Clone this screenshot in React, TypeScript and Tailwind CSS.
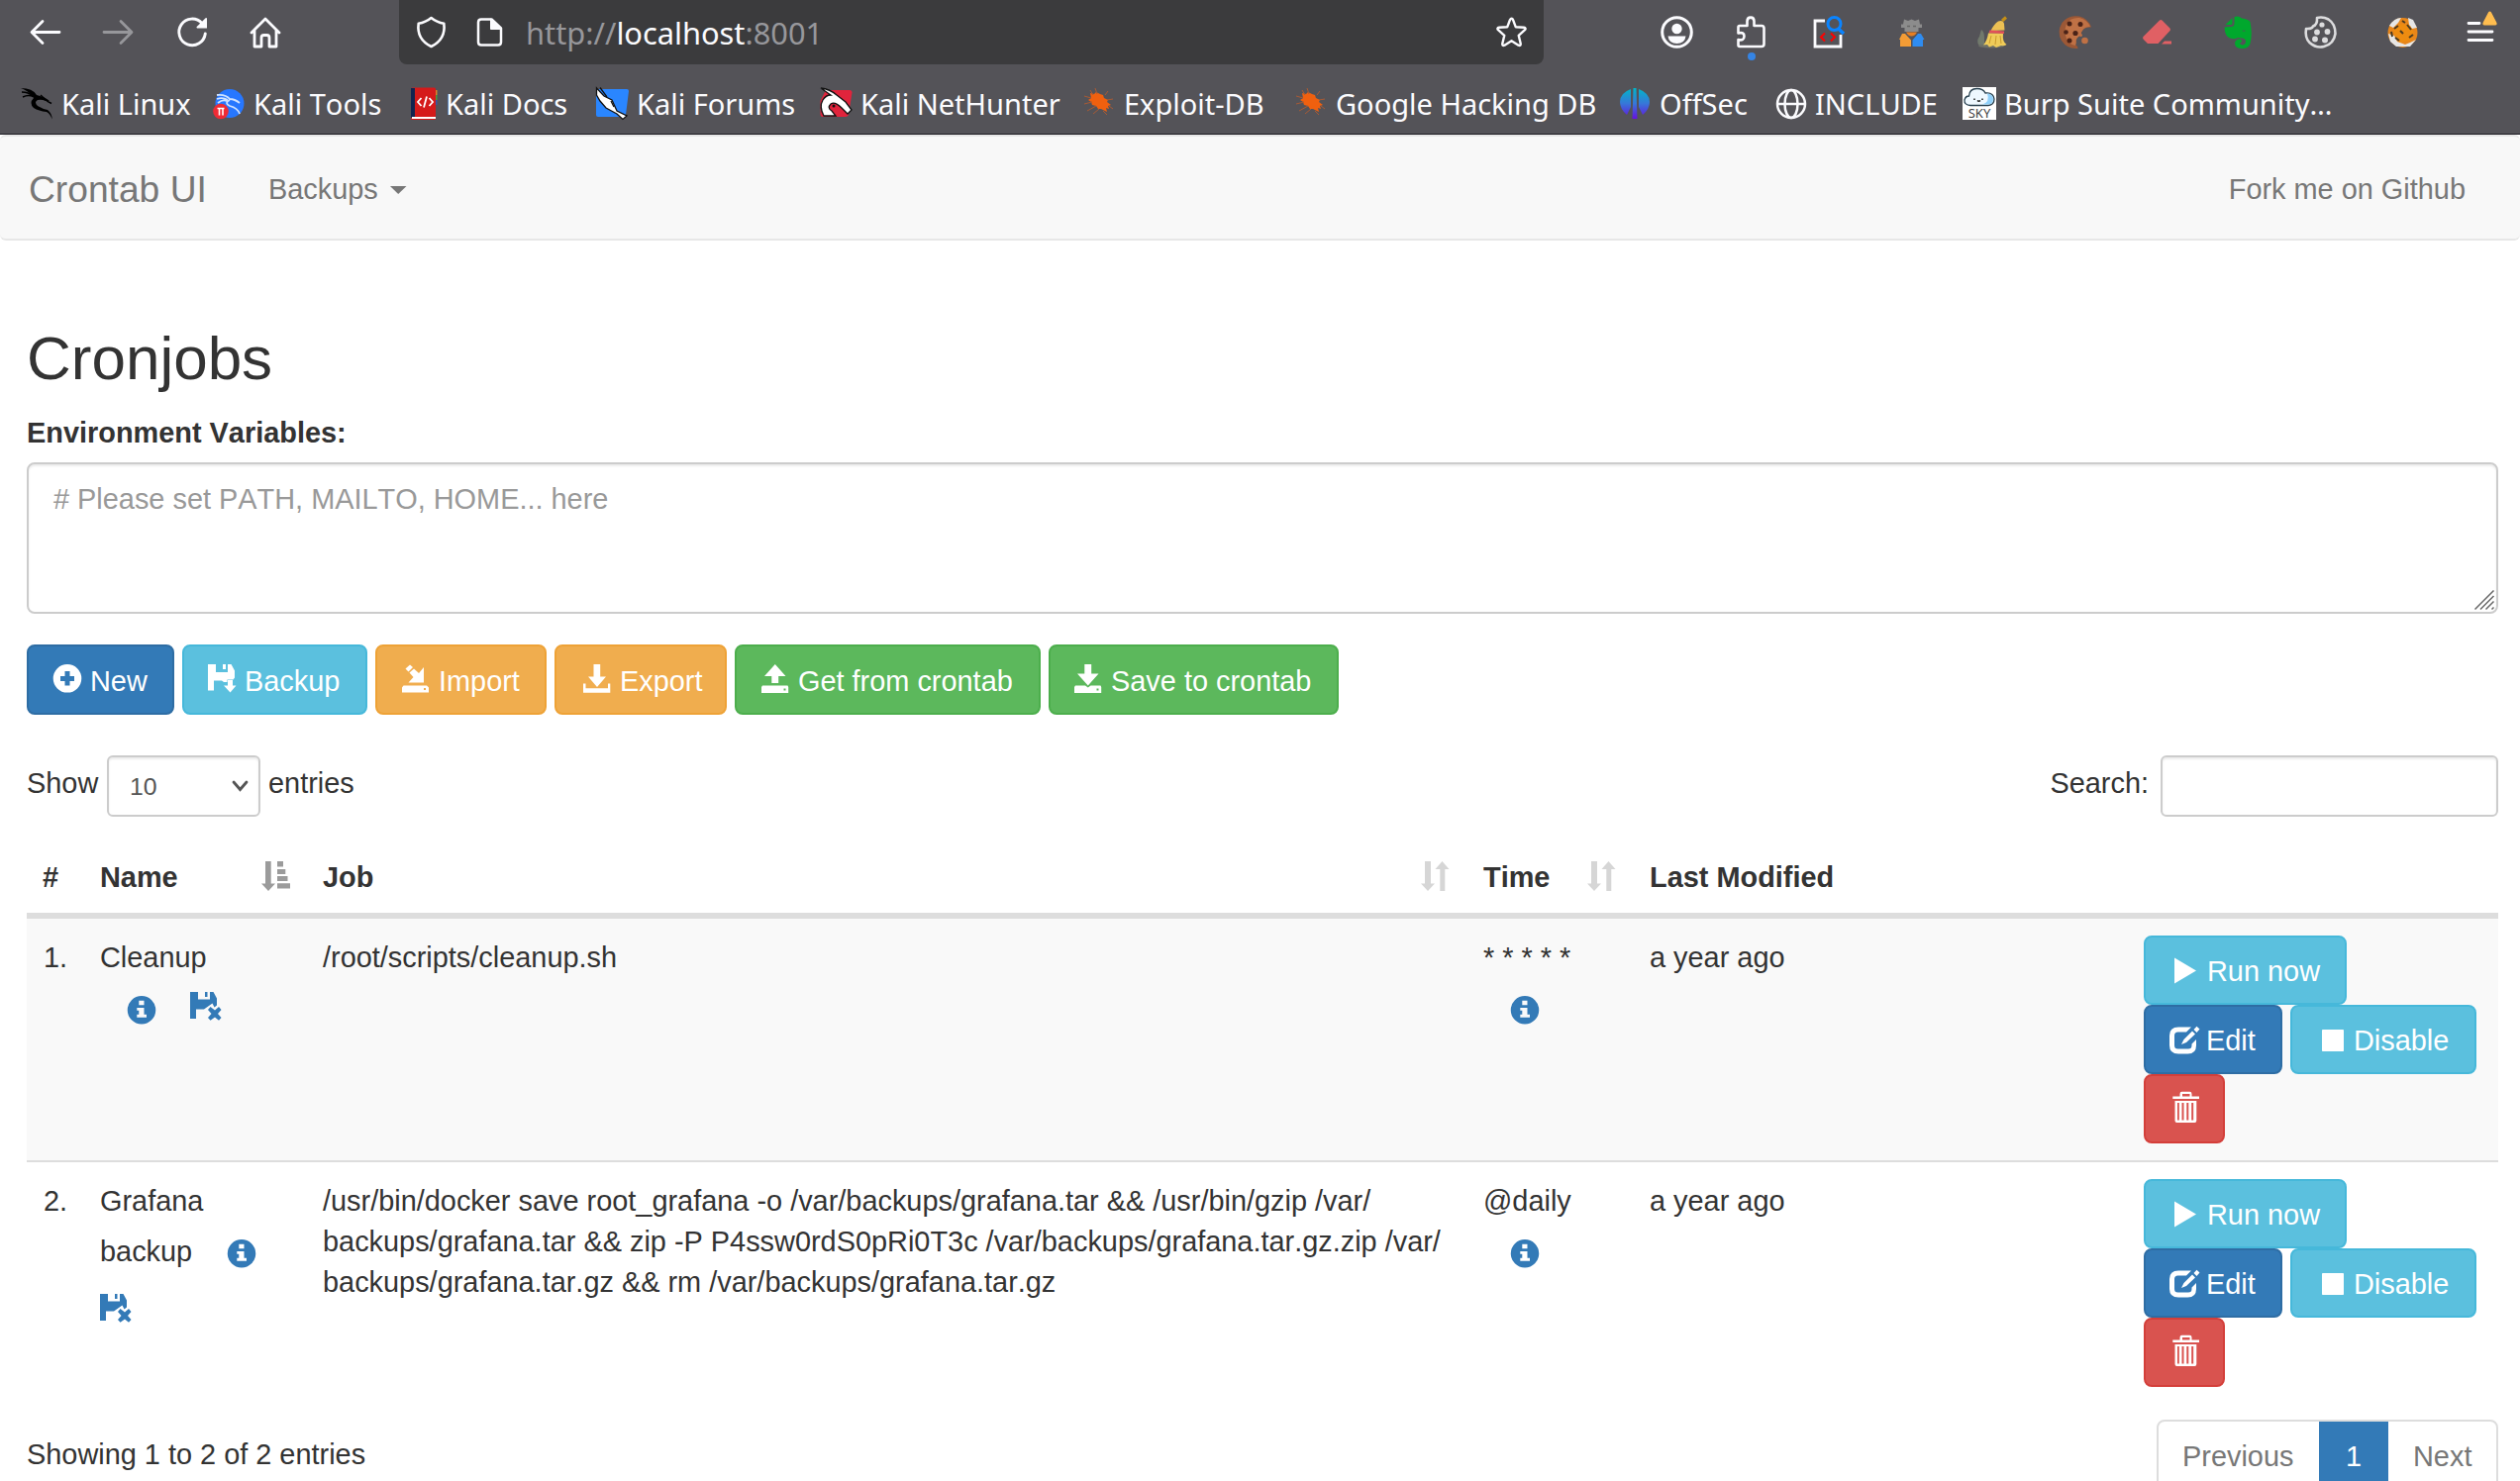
import { Fragment, type ReactNode } from "react";

type IconProps = { className?: string };

function Svg({
	w,
	h,
	className = "",
	children,
}: {
	w: number;
	h: number;
	className?: string;
	children: ReactNode;
}) {
	return (
		<svg
			width={w}
			height={h}
			viewBox={`0 0 ${w} ${h}`}
			fill="currentColor"
			className={`shrink-0 overflow-visible ${className}`}
		>
			{children}
		</svg>
	);
}

/* ---------- toolbar icons ---------- */

const BackIcon = () => (
	<Svg w={33} h={33}>
		<path d="M14 5.500L3 16.500L14 27.500M3.500 16.500H31" fill="none" stroke="currentColor" strokeWidth="2.800" strokeLinecap="round" strokeLinejoin="round" />
	</Svg>
);

const ForwardIcon = () => (
	<Svg w={33} h={33} className="text-[#97979b]">
		<path d="M19 5.500L30 16.500L19 27.500M29.500 16.500H2" fill="none" stroke="currentColor" strokeWidth="2.800" strokeLinecap="round" strokeLinejoin="round" />
	</Svg>
);

const ReloadIcon = () => (
	<Svg w={33} h={33}>
		<path d="M30.300 18A13.300 13.300 0 1 1 27 7.500" fill="none" stroke="currentColor" strokeWidth="2.900" strokeLinecap="round" />
		<path d="M32 2.500V12.500H22Q21 11.800 21.700 11L30.600 2.200Q31.600 1.700 32 2.500Z" />
	</Svg>
);

const HomeIcon = () => (
	<Svg w={33} h={33}>
		<path d="M3 17L17 3L31 17M6 15V31H13V22Q13 19.500 15.500 19.500H18.500Q21 19.500 21 22V31H28V15" fill="none" stroke="currentColor" strokeWidth="2.800" strokeLinecap="round" strokeLinejoin="round" />
	</Svg>
);

const ShieldIcon = () => (
	<Svg w={33} h={33}>
		<path d="M16.500 2Q22 6.500 29.300 7.700Q31.500 23.500 16.500 31Q1.500 23.500 3.700 7.700Q11 6.500 16.500 2Z" fill="none" stroke="currentColor" strokeWidth="2.600" strokeLinejoin="round" />
	</Svg>
);

const PageIcon = () => (
	<Svg w={33} h={33}>
		<path d="M8 3.500H18.500L28 12.500V26.500Q28 29.500 25 29.500H8Q5 29.500 5 26.500V6.500Q5 3.500 8 3.500Z" fill="none" stroke="currentColor" strokeWidth="2.500" strokeLinejoin="round" />
		<path d="M17.500 3V13.500H28.500Z" stroke="currentColor" strokeLinejoin="round" />
	</Svg>
);

const StarIcon = () => (
	<Svg w={33} h={33}>
		<path d="M16.500 2.800Q17.600 2.800 18.100 4.200L20.700 11.200L29 11.800Q31.600 12.300 30 14.200L23.700 19.800L25.700 28Q26 30.800 23.500 29.700L16.500 25.300L9.500 29.700Q7 30.800 7.300 28L9.300 19.800L3 14.200Q1.400 12.300 4 11.800L12.300 11.200L14.900 4.200Q15.400 2.800 16.500 2.800Z" fill="none" stroke="currentColor" strokeWidth="2.400" strokeLinejoin="round" />
	</Svg>
);

const AccountIcon = () => (
	<Svg w={33} h={33}>
		<circle cx="16.500" cy="16.500" r="14.800" fill="none" stroke="currentColor" strokeWidth="3" />
		<circle cx="16.500" cy="13" r="5.200" />
		<path d="M7.500 20.500H25.500Q24.500 28 16.500 28Q8.500 28 7.500 20.500Z" />
	</Svg>
);

const PuzzleIcon = () => (
	<Svg w={33} h={33}>
		<path d="M5 31Q3.500 31 3.500 29.500V24Q9.500 25.500 9.500 20.500Q9.500 16 3.500 17.500V11.500Q3.500 10 5 10H12.500V5.500Q12.500 1.600 16 1.600Q19.500 1.600 19.500 5.500V10H27Q29.500 10 29.500 12.500V28.500Q29.500 31 27 31Z" fill="none" stroke="currentColor" strokeWidth="2.600" strokeLinejoin="round" />
	</Svg>
);

const InspectIcon = () => (
	<Svg w={33} h={33}>
		<path d="M12 5H2V31H28V19" fill="none" stroke="currentColor" strokeWidth="2.800" />
		<circle cx="21.500" cy="8" r="6.500" fill="none" stroke="#0a84ff" strokeWidth="3" />
		<path d="M25 12.500L31 18" stroke="#0a84ff" strokeWidth="3.500" />
		<path d="M12 17.500L8 21.500L12 25.500M18 17.500L22 21.500L18 25.500" fill="none" stroke="#f00" strokeWidth="2" />
	</Svg>
);

const SpyIcon = () => (
	<Svg w={33} h={33}>
		<path d="M9 3.500L13 5L16.500 3.500L20 5L24 3.500L25 8.500H27V12H23.500V16H9.500V12H6V8.500H8Z" fill="#8c8c8c" />
		<path d="M11 16.500H22Q20 20.500 16.500 20.500Q13 20.500 11 16.500Z" fill="#e67e22" />
		<path d="M7 18H10L16 24.500V31H5V24H4Z" fill="#f39c35" />
		<path d="M26 18H23L17.500 24.500V31H28V24H29.500Z" fill="#2f8cf0" />
		<path d="M12 10.500H15M18 10.500H21" stroke="#666" strokeWidth="1.500" />
	</Svg>
);

const BroomIcon = () => (
	<Svg w={33} h={33}>
		<ellipse cx="15" cy="30" rx="13" ry="2.500" fill="#6d7068" />
		<path d="M5 14Q8 16 8 22V29H2Q0 24 3 21Q4 17 5 14Z" fill="#71796c" />
		<path d="M26 5L30 1.500" stroke="#c58f16" strokeWidth="3" />
		<path d="M22 5.500Q27 4 28 8L28.500 14.500L14.500 15Q18 8 22 5.500Z" fill="#ecc054" />
		<path d="M13.500 14.500L28 15.500V18L12.500 17.500Z" fill="#e2505a" />
		<path d="M12 17.500L27 18Q26 26 30.500 29Q28 31 25 30L20 32L17 30L13 31.500L11 29L7 29.500Q11 25 12 17.500Z" fill="#efcb59" />
		<path d="M15 20L13 28M20 20L19 29M24 20L25 28" stroke="#c99a2e" strokeWidth="1" />
	</Svg>
);

const CookieIcon = () => (
	<Svg w={33} h={33}>
		<path d="M21 .600Q10 -1.500 3.500 7Q-2 16 3 25Q9 34 19.500 33Q20 31 17 29Q19 27 17.500 25Q19 21 23 19Q22 17 24 15Q26 11 33 11.500Q30 3 21 .600Z" fill="#9c5836" />
		<path d="M21 2Q12 1.500 8 8Q5 16 8 23Q11 29 17 30Q18 26 17.500 25Q19 21 23 19Q22 17 24 15Q26 11 32 11Q29 4 21 2Z" fill="#bf7145" />
		<g fill="#4a2217">
			<circle cx="11" cy="8" r="2.500" />
			<circle cx="22" cy="8.500" r="2.500" />
			<circle cx="7.500" cy="16.500" r="2.300" />
			<circle cx="17" cy="17.500" r="2.600" />
			<circle cx="11" cy="25" r="2.500" />
		</g>
		<circle cx="26.500" cy="25" r="3.300" fill="#bf7145" />
		<circle cx="22.500" cy="19.500" r="1.500" fill="#bf7145" />
	</Svg>
);

const EraserIcon = () => (
	<Svg w={33} h={33}>
		<path d="M19 4.500Q20.500 3.500 22 5L29.500 12.500Q30.500 14 29.500 15L17.500 28H7L2.500 23.500Q1.500 22 2.500 21Z" fill="#e06064" />
		<path d="M24 25.500H31V28.500H21Z" fill="#e06064" />
	</Svg>
);

const EvernoteIcon = () => (
	<Svg w={33} h={33}>
		<path d="M10.500 2L3.500 9H9Q10.500 9 10.500 7.500ZM12.500 1Q17 -.500 20 2.500Q27 3.500 28.500 6Q31 19 28.500 28Q27 33 20.500 33Q13 33 13 28Q13 24 17.500 23.500Q20 23.500 20 25.500Q20 27 18 27.500Q18.500 29.500 21 29.500Q24 29 24 25.500Q23.500 22.500 19.500 22.500L16 22Q14 24 8 22.500Q3 21 2.500 11.500Q4 11 10 11Q12.500 10.500 12.500 8Z" fill="#00a82d" />
		<path d="M20.500 15.500Q21.500 13.500 24 15.500Z" fill="#535257" />
	</Svg>
);

const CookieOutlineIcon = () => (
	<Svg w={33} h={33} className="text-[#dcdcde]">
		<path d="M13 2Q13.500 9 9 10.500Q8 13.500 2 13Q.500 22 5.500 27Q12 33 20 31Q30 28.500 31.500 18Q31.500 8 24.500 3.500Q19 .500 13 2Z" fill="none" stroke="currentColor" strokeWidth="2.600" strokeLinejoin="round" />
		<circle cx="18" cy="9" r="2.600" />
		<circle cx="13" cy="16.500" r="2.900" />
		<circle cx="23.500" cy="16" r="2.900" />
		<circle cx="11" cy="23.500" r="2.900" />
		<circle cx="21" cy="24.500" r="3" />
	</Svg>
);

const FoxyIcon = () => (
	<Svg w={33} h={33}>
		<circle cx="16.500" cy="17" r="15" fill="#e8861a" />
		<path d="M3 10Q8 2 15 2L12 7L7 12ZM22 2L27 4L31 12L26 13L23 9ZM2 18L8 20L11 26L19 29L24 27L30 24L24 31L10 31L4 26Z" fill="#e6e6e6" />
		<path d="M7 14L14 8L24 10L28 17L24 25L14 27L9 21Z" fill="#ee8c10" />
		<path d="M8 13L12 10M21 9L25 14M14 15L17 18M9 22L13 25M23 22L27 19M16 5L19 7M5 16L6 21" stroke="#4a3a22" strokeWidth="2" />
	</Svg>
);

const MenuIcon = () => (
	<Svg w={36} h={36}>
		<path d="M5 13.500H16M5 22H29M5 30.500H29" stroke="currentColor" strokeWidth="2.800" strokeLinecap="round" />
		<path d="M26.500 1.500Q27.500 1.500 28 2.500L33.500 13Q34 15.500 32 15.500H21Q19 15.500 19.500 13L25 2.500Q25.500 1.500 26.500 1.500Z" fill="#ffbd4f" />
	</Svg>
);

/* ---------- bookmark favicons ---------- */

const KaliDragonIcon = () => (
	<Svg w={33} h={33} className="text-black">
		<path d="M0 1Q12 1 16 8Q25 10 29 14L25 14Q21 12 17 13Q13 15 17 19Q22 22 27 23Q32 27 31.500 32.500Q30 27 26 25Q18 24 13 21Q8 16 13 11L12 9Q6 3 0 1Z" />
		<path d="M1 5Q8 5 12 9M2 10Q8 7 13 10M20 8L27 14.500L31 16.500" fill="none" stroke="currentColor" strokeWidth="1.400" />
	</Svg>
);

const KaliToolsIcon = () => (
	<Svg w={33} h={33}>
		<circle cx="17" cy="16.500" r="14.500" fill="#2777ff" />
		<path d="M4 8Q13 7 17 12Q22 12 27 16M17 13Q11 16 17 19Q25 21 27 27M4 12Q10 10 15 13M5 16Q10 12 14 14" fill="none" stroke="#cfe2ff" strokeWidth="1.800" />
		<circle cx="8" cy="24.500" r="7.800" fill="#ee2b35" />
		<path d="M4.500 21.500H11.500M6.500 21.500V28.500M10 21.500V28.500" stroke="#fff" strokeWidth="1.600" />
	</Svg>
);

const KaliDocsIcon = () => (
	<Svg w={27} h={33}>
		<path d="M24 3H26.500V8H24Z" fill="#d8842a" />
		<path d="M24 8H26.500V13H24Z" fill="#4a9b3c" />
		<path d="M24 13H26.500V18H24Z" fill="#3357a8" />
		<rect x="0" y=".500" width="25" height="32.500" rx="1.500" fill="#d51a1a" />
		<rect x="0" y="1" width="4" height="30" fill="#12244f" />
		<rect x="1" y="30" width="24" height="2" fill="#fff" />
		<path d="M10.500 11L7 15L10.500 19M18.500 11L22 15L18.500 19M16 9.500L13 20.500" fill="none" stroke="#fff" strokeWidth="1.800" />
	</Svg>
);

const KaliForumsIcon = () => (
	<Svg w={33} h={33}>
		<path d="M3 2H31Q33 2 33 4L30 28Q29.500 30 27 30H2Q0 30 0 28V4Q0 2 3 2Z" fill="#2a86ff" />
		<path d="M.500 1L8 9L16 13L21 24L31 29L27 32.500L21 27L10 21L4 14L.500 8Z" fill="#fff" stroke="#111" strokeWidth="1.300" />
		<path d="M4 .500L11 10M15 14L18 20" stroke="#111" strokeWidth="1.300" />
	</Svg>
);

const NetHunterIcon = () => (
	<Svg w={33} h={33}>
		<path d="M6 3H30Q32.500 3 32.500 5.500L29 28Q28 30 26 30H3Q.500 30 .500 27V14Z" fill="#e0243c" />
		<path d="M1 1Q10 2 17 8L26 15L32 23L28 27L22 21Q15 14 11 17Q7 21 12 24L16 29H4Q-1 20 3 13Q6 8 11 8Z" fill="#fff" stroke="#111" strokeWidth="1.300" />
		<circle cx="14" cy="19" r="1.500" fill="#111" />
	</Svg>
);

const BugIcon = () => (
	<Svg w={33} h={33}>
		<path d="M7 6L11 7L13 5L17 7L20 8L21 11L25 13L24 15L28 18L25 19L26 22L23 21L24 25L18 22L15 22L13 19L9 18L8 15L5 13L8 11Z" fill="#f0600f" />
		<path d="M7 3L10 8M12 1L14 7M1 9L8 11M1 17L9 15M4 24L13 19M10 27L16 22M20 24L24 28M22 8L25 4M24 13L30 12M26 19L30 22" stroke="#a85a35" strokeWidth="1" />
	</Svg>
);

const OffSecIcon = () => (
	<Svg w={33} h={33}>
		<defs>
			<linearGradient id="offsec" x1="0" y1="0" x2="0" y2="1">
				<stop offset="0" stopColor="#00b7c9" />
				<stop offset=".5" stopColor="#3777d8" />
				<stop offset="1" stopColor="#6610e0" />
			</linearGradient>
		</defs>
		<path d="M12 2V20L8 28Q1 22 1 15Q1 6 12 2ZM20 2V20L24 28Q31 22 31 15Q31 6 20 2ZM14.500 1H17.500L18.500 32H13.500Z" fill="url(#offsec)" />
	</Svg>
);

const GlobeIcon = () => (
	<Svg w={33} h={33}>
		<g fill="none" stroke="currentColor" strokeWidth="2.500">
			<circle cx="17" cy="17" r="14" />
			<ellipse cx="17" cy="17" rx="6.500" ry="14" />
			<path d="M3 17H31" />
		</g>
	</Svg>
);

const SkyIcon = () => (
	<Svg w={34} h={33}>
		<rect width="34" height="33" fill="#fff" />
		<path d="M8 18.500Q1.500 18 2 13Q3 9 6.500 9Q7 1.500 14.500 1.500Q21 1.500 23 6Q31 5 32 12Q32 18 26 18.500Z" fill="#eef8ff" stroke="#28404f" strokeWidth="1.300" />
		<path d="M25 6.500Q30.500 7 31 12Q31 17 26 17.500H20Q28 15 25 6.500Z" fill="#8fd0fa" />
		<path d="M12 11.500V13M20 11.500V13M15 13.500Q16.500 15 18 13.500" stroke="#222" strokeWidth="1.500" fill="none" />
		<text x="17" y="31" textAnchor="middle" fontSize="13" fontFamily="Noto Sans" fill="#444">
			SKY
		</text>
	</Svg>
);

/* ---------- glyphicons ---------- */

const PlusSign = ({ className }: IconProps) => (
	<Svg w={29} h={29} className={className}>
		<path fillRule="evenodd" d="M14 0A14.200 14.200 0 1 1 14 28.600A14.200 14.200 0 1 1 14 0ZM11.500 7V12H7V17H11.500V21.500H16.500V17H21V12H16.500V7Z" />
	</Svg>
);

const FloppySave = ({ className }: IconProps) => (
	<Svg w={29} h={29} className={className}>
		<path d="M0 0H8V8H20V0H23.500L27 6.500V13.500L25.500 15.500H19.500V18H16L14 16.500H6V26.500H0Z" />
		<path d="M15 0H18V5H15Z" />
		<path d="M20 16H25V21.500H28.500L22.500 28.500L16 21.500H20Z" />
	</Svg>
);

const FloppyRemove = ({ className }: IconProps) => (
	<Svg w={32} h={29} className={className}>
		<path d="M0 0H8V7.500H20V0H23.500L27 6.500V13.500L24.500 15.500L22.500 11.500L14 17.500H6V27H0Z" />
		<path d="M15 0H17.500V5H15Z" />
		<path d="M20.500 15L25 18.500L29 15L31.500 18L28 22L31.500 26L29 28.800L25 25.500L20.500 28.800L18 26L21.500 22L18 18Z" />
	</Svg>
);

const ImportGlyph = ({ className }: IconProps) => (
	<Svg w={29} h={29} className={className}>
		<path d="M3.500 4.500L8 .500L11 3L6.500 7.500ZM7.500 8.500L12 4.500L17 9L22 3V18.500H6.500L11.500 13Z" />
		<path fillRule="evenodd" d="M1.500 21.500H25L27 23.500V28.500H0V23.500ZM22 24V26H24V24Z" />
	</Svg>
);

const SaveGlyph = ({ className }: IconProps) => (
	<Svg w={29} h={29} className={className}>
		<path d="M10.500 0H17.200V12.500H23L14 23L5 12.500H10.500Z" />
		<path d="M0 19.500H2.500V24.200H25V19.500H27.300V28.700H0Z" />
	</Svg>
);

const OpenTray = ({ className }: IconProps) => (
	<Svg w={29} h={29} className={className}>
		<path d="M13.800 0L24.500 12H17.200V19H10.300V12H3Z" />
		<path fillRule="evenodd" d="M1 21.500H26.500L27.200 23V29H0V23ZM22.500 24.500V26.500H24.500V24.500Z" />
	</Svg>
);

const SaveTray = ({ className }: IconProps) => (
	<Svg w={29} h={29} className={className}>
		<path d="M10.300 0H17.200V9.500H24.500L13.800 21.500L3 9.500H10.300Z" />
		<path fillRule="evenodd" d="M1 21.500H11L13.800 23.500L16.500 21.500H26.500L27.200 23V29H0V23ZM22.500 24.500V26.500H24.500V24.500Z" />
	</Svg>
);

const InfoSign = ({ className }: IconProps) => (
	<Svg w={29} h={29} className={className}>
		<path fillRule="evenodd" d="M14 0A14.200 14.200 0 1 1 14 28.500A14.200 14.200 0 1 1 14 0ZM11.300 4.700V9.200H16.500V4.700ZM9.300 12V14.800H11.300V18.800H9.300V21.700H19V18.800H16.500V12Z" />
	</Svg>
);

const PlayGlyph = () => (
	<Svg w={29} h={29}>
		<path d="M4 1.500L26 14.500L4 27.500Z" />
	</Svg>
);

const EditGlyph = () => (
	<Svg w={31} h={29}>
		<path d="M22 1.500H9Q0 1.500 0 10V20Q0 28.500 9 28.500H18.500Q27 28.500 27 20V14L22.500 18.500V20Q22.500 23.500 19 23.500H8.500Q5 23.500 5 20V10Q5 6.500 8.500 6.500H17Z" />
		<path d="M23 5.500L26 8.500L17 17L12 19L14.500 14ZM24.500 4L27.500 .800L30.500 3.500L27.500 7Z" />
	</Svg>
);

const StopGlyph = () => (
	<Svg w={29} h={29}>
		<rect x="5" y="4" width="22" height="22" rx=".8" />
	</Svg>
);

const TrashGlyph = () => (
	<Svg w={28} h={33}>
		<path fillRule="evenodd" d="M7.500 5.500V3Q7.500 .800 9.500 .800H17.500Q19.500 .800 19.500 3V5.500H27V8H.300V5.500ZM10 5.500H17.500V3H10Z" />
		<path fillRule="evenodd" d="M2.500 10H24.300V30Q24.300 32 22.500 32H4.500Q2.500 32 2.500 30ZM5 12V29.500H6.800V12ZM9.500 12V29.500H11.500V12ZM14.300 12V29.500H16.300V12ZM19.200 12V29.500H21.200V12Z" />
	</Svg>
);

const SortAsc = () => (
	<Svg w={29} h={30} className="text-[#9b9b9b]">
		<path d="M4 0H9.700V22.500H14L7 30L0 22.500H4ZM16 0H22V5.500H16ZM16 8H24.300V13H16ZM16 15H26.500V20H16ZM16 22.300H29V27.500H16Z" />
	</Svg>
);

const SortBoth = () => (
	<Svg w={29} h={30} className="text-[#d6d6d6]">
		<path d="M4 0H10V22.500H14L7 30L0 22.500H4ZM19.300 30V8H14.500L21.500 0L28.500 8H24.300V30Z" />
	</Svg>
);

/* ---------- data ---------- */

const bookmarks = [
	{ name: "Kali Linux", icon: KaliDragonIcon, width: "w-[194px]" },
	{ name: "Kali Tools", icon: KaliToolsIcon, width: "w-[200px]" },
	{ name: "Kali Docs", icon: KaliDocsIcon, width: "w-[187px]" },
	{ name: "Kali Forums", icon: KaliForumsIcon, width: "w-[226px]" },
	{ name: "Kali NetHunter", icon: NetHunterIcon, width: "w-[266px]" },
	{ name: "Exploit-DB", icon: BugIcon, width: "w-[214px]" },
	{ name: "Google Hacking DB", icon: BugIcon, width: "w-[327px]" },
	{ name: "OffSec", icon: OffSecIcon, width: "w-[157px]" },
	{ name: "INCLUDE", icon: GlobeIcon, width: "w-[190px]" },
	{ name: "Burp Suite Community…", icon: SkyIcon, width: "w-[400px]" },
];

const extensions = [
	InspectIcon,
	SpyIcon,
	BroomIcon,
	CookieIcon,
	EraserIcon,
	EvernoteIcon,
	CookieOutlineIcon,
	FoxyIcon,
];

const actions = [
	{ name: "New", icon: PlusSign, style: "w-[149px] pl-[25px] bg-[#337ab7] border-[#2e6da4]" },
	{ name: "Backup", icon: FloppySave, style: "w-[187px] pl-[24px] bg-[#5bc0de] border-[#46b8da]" },
	{ name: "Import", icon: ImportGlyph, style: "w-[173px] pl-[25px] bg-[#f0ad4e] border-[#eea236]" },
	{ name: "Export", icon: SaveGlyph, style: "w-[174px] pl-[27px] bg-[#f0ad4e] border-[#eea236]" },
	{ name: "Get from crontab", icon: OpenTray, style: "w-[309px] pl-[25px] bg-[#5cb85c] border-[#4cae4c]" },
	{ name: "Save to crontab", icon: SaveTray, style: "w-[293px] pl-[24px] bg-[#5cb85c] border-[#4cae4c]" },
];

const jobs = [
	{
		id: 1,
		name: ["Cleanup"],
		command: ["/root/scripts/cleanup.sh"],
		time: "* * * * *",
		modified: "a year ago",
	},
	{
		id: 2,
		name: ["Grafana", "backup"],
		command: [
			"/usr/bin/docker save root_grafana -o /var/backups/grafana.tar && /usr/bin/gzip /var/",
			"backups/grafana.tar && zip -P P4ssw0rdS0pRi0T3c /var/backups/grafana.tar.gz.zip /var/",
			"backups/grafana.tar.gz && rm /var/backups/grafana.tar.gz",
		],
		time: "@daily",
		modified: "a year ago",
	},
];

const columns = "grid grid-cols-[58px_224px_1172px_168px_499px_375px]";

/* ---------- sections ---------- */

function BrowserChrome() {
	return (
		<header className="h-[136px] bg-[#545358] border-b border-[#1c1b22] text-[#fbfbfe] font-['Noto_Sans',sans-serif]">
			<div className="flex h-[66px] items-start">
				<div className="flex w-[403px] gap-[41px] pl-[29px] pt-[16px]">
					<BackIcon />
					<ForwardIcon />
					<ReloadIcon />
					<HomeIcon />
				</div>
				<div className="flex h-[65px] w-[1156px] items-start rounded-b-lg bg-[#3b3b3d] pl-[16px] pr-[16px] pt-[16px]">
					<ShieldIcon />
					<div className="ml-[26px]">
						<PageIcon />
					</div>
					<div className="ml-[20px] -mt-[3px] flex-1 text-[30.8px] leading-[41px] text-[#97979b]">
						http://<span className="text-[#fbfbfe]">localhost</span>:8001
					</div>
					<StarIcon />
				</div>
				<div className="flex pl-[118px] pt-[16px]">
					<AccountIcon />
					<div className="ml-[42px] flex flex-col items-center">
						<PuzzleIcon />
						<div className="mt-[4px] size-[8px] rounded-full bg-[#3584e4]" />
					</div>
					<div className="ml-[46px] flex gap-[49.7px]">
						{extensions.map((Icon, index) => (
							<Icon key={index} />
						))}
					</div>
					<div className="-mt-[6px] ml-[45px]">
						<MenuIcon />
					</div>
				</div>
			</div>
			<nav className="flex h-[69px] items-center pb-[1px] pl-[21px] pt-[9px]">
				{bookmarks.map(({ name, icon: Icon, width }) => (
					<div key={name} className={`flex shrink-0 items-center gap-[8px] whitespace-nowrap ${width}`}>
						<Icon />
						<span className="text-[29px] leading-[36px]">{name}</span>
					</div>
				))}
			</nav>
		</header>
	);
}

function Navbar() {
	return (
		<nav className="flex h-[107px] items-center rounded-md border-y-2 border-[#e7e7e7] bg-[#f8f8f8] pl-[29px] pr-[55px] pt-[3px] text-[#777]">
			<span className="w-[242px] text-[37.2px]">Crontab UI</span>
			<span className="flex items-center gap-[12px]">
				Backups
				<Svg w={17} h={8} className="mt-[2px]">
					<path d="M0 0H16.500L8.200 8Z" />
				</Svg>
			</span>
			<span className="ml-auto">Fork me on Github</span>
		</nav>
	);
}

function RowActions() {
	return (
		<div className="flex flex-col items-start pt-[17px] pl-[17px] text-white">
			<button className="flex h-[70px] w-[205px] items-center gap-[8px] rounded-lg border-2 border-[#46b8da] bg-[#5bc0de] pl-[25px]">
				<PlayGlyph />
				<span className="pt-[2px]">Run now</span>
			</button>
			<div className="flex gap-[8px]">
				<button className="flex h-[70px] w-[140px] items-center gap-[6px] rounded-lg border-2 border-[#2e6da4] bg-[#337ab7] pl-[24px]">
					<EditGlyph />
					<span className="pt-[2px]">Edit</span>
				</button>
				<button className="flex h-[70px] w-[188px] items-center gap-[8px] rounded-lg border-2 border-[#46b8da] bg-[#5bc0de] pl-[25px]">
					<StopGlyph />
					<span className="pt-[2px]">Disable</span>
				</button>
			</div>
			<button className="flex h-[70px] w-[82px] items-start rounded-lg border-2 border-[#d43f3a] bg-[#d9534f] pl-[27px] pt-[15px]">
				<TrashGlyph />
			</button>
		</div>
	);
}

function JobsTable() {
	return (
		<div>
			<div className={`${columns} box-content h-[65px] items-start border-b-[6px] border-[#ddd] font-bold`}>
				<div className="pl-[16px] pt-[9px]">#</div>
				<div className="flex justify-between pl-[16px] pr-[16px] pt-[9px]">
					Name
					<div className="pt-[4px]">
						<SortAsc />
					</div>
				</div>
				<div className="flex justify-between pl-[17px] pr-[17px] pt-[9px]">
					Job
					<div className="pt-[4px]">
						<SortBoth />
					</div>
				</div>
				<div className="flex justify-between pl-[17px] pr-[17px] pt-[9px]">
					Time
					<div className="pt-[4px]">
						<SortBoth />
					</div>
				</div>
				<div className="pl-[17px] pt-[9px]">Last Modified</div>
			</div>
			{jobs.map((job, index) => (
				<div
					key={job.id}
					className={`${columns} ${index === 0 ? "h-[246px] border-b-2 border-[#ddd] bg-[#f9f9f9]" : "h-[244px]"}`}
				>
					<div className="pl-[17px] pt-[19px]">{job.id}.</div>
					{job.name.length === 1 ? (
						<div className="pl-[16px] pt-[19px]">
							{job.name[0]}
							<div className="flex gap-[34px] pl-[28px] pt-[14px] text-[#337ab7]">
								<InfoSign className="mt-[4px]" />
								<FloppyRemove />
							</div>
						</div>
					) : (
						<div className="pl-[16px] pt-[19px]">
							{job.name[0]}
							<div className="flex items-start gap-[36px] pt-[10px]">
								{job.name[1]}
								<InfoSign className="mt-[8px] text-[#337ab7]" />
							</div>
							<FloppyRemove className="mt-[22px] text-[#337ab7]" />
						</div>
					)}
					<div className="whitespace-nowrap pl-[17px] pt-[19px]">
						{job.command.map((line) => (
							<Fragment key={line}>
								{line}
								<br />
							</Fragment>
						))}
					</div>
					<div className="pl-[17px] pt-[19px]">
						{job.time}
						<InfoSign className="ml-[27.5px] mt-[18px] text-[#337ab7]" />
					</div>
					<div className="pl-[17px] pt-[19px]">{job.modified}</div>
					<RowActions />
				</div>
			))}
		</div>
	);
}

export default function App() {
	return (
		<div className="h-[1496px] w-[2545px] overflow-hidden bg-white font-['Liberation_Sans',sans-serif] text-[28.9px] leading-[41px] text-[#333] [font-kerning:none]">
			<BrowserChrome />
			<Navbar />
			<main className="pl-[27px] pr-[22px]">
				<h1 className="pt-[81px] text-[62px] leading-[75px]">Cronjobs</h1>
				<div className="pt-[18px] font-bold">Environment Variables:</div>
				<div className="relative mt-[9px] h-[153px] rounded-lg border-2 border-[#ccc] pl-[25px] pt-[15px] text-[#999] shadow-[inset_0_2px_2px_rgba(0,0,0,0.075)]">
					# Please set PATH, MAILTO, HOME... here
					<Svg w={20} h={20} className="absolute bottom-[2px] right-[2px] text-[#666]">
						<path d="M.500 19.500L19.500 .500M6 19.500L19.500 6M11.500 19.500L19.500 11.500M17.500 19.500L19.500 17.500" stroke="currentColor" strokeWidth="1.500" />
					</Svg>
				</div>
				<div className="flex gap-[8px] pt-[31px] text-white">
					{actions.map(({ name, icon: Icon, style }) => (
						<button key={name} className={`flex h-[71px] items-start gap-[8px] whitespace-nowrap rounded-lg border-2 ${style}`}>
							<Icon className="mt-[18px]" />
							<span className="mt-[15px]">{name}</span>
						</button>
					))}
				</div>
				<div className="flex h-[135px] items-start pt-[41px]">
					<span className="w-[81px] pt-[8px]">Show</span>
					<div className="flex h-[62px] w-[155px] items-center justify-between rounded-md border-2 border-[#ccc] pl-[21px] pr-[10px] text-[24.8px] text-[#555] shadow-[inset_0_2px_2px_rgba(0,0,0,0.075)]">
						10
						<Svg w={17} h={12}>
							<path d="M2 2L8.500 9.500L15 2" fill="none" stroke="currentColor" strokeWidth="2.800" strokeLinecap="round" />
						</Svg>
					</div>
					<span className="pl-[8px] pt-[8px]">entries</span>
					<span className="ml-auto pr-[12px] pt-[8px]">Search:</span>
					<div className="h-[62px] w-[341px] rounded-md border-2 border-[#ccc] shadow-[inset_0_2px_2px_rgba(0,0,0,0.075)]" />
				</div>
				<JobsTable />
				<div className="flex items-start justify-between pt-[16px]">
					<span className="pt-[15px]">Showing 1 to 2 of 2 entries</span>
					<div className="flex h-[72px] w-[345px] overflow-hidden rounded-lg border-2 border-[#ddd] text-[#777]">
						<span className="w-[162px] pl-[24px] pt-[15px]">Previous</span>
						<span className="-mt-[2px] w-[70px] bg-[#337ab7] pt-[17px] text-center text-white">1</span>
						<span className="pl-[25px] pt-[15px]">Next</span>
					</div>
				</div>
			</main>
		</div>
	);
}
